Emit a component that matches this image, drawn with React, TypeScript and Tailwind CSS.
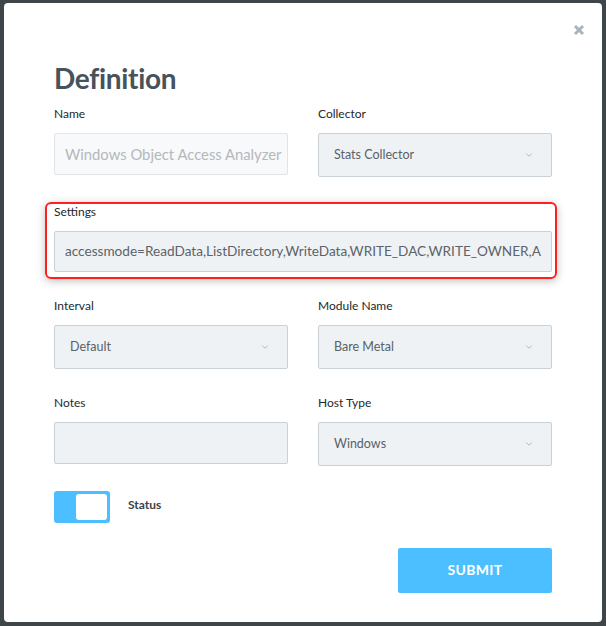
import { ChevronDown } from "lucide-react";

type SelectProps = {
  value: string;
};

function FakeSelect({ value }: SelectProps) {
  return (
    <div className="flex h-[44px] w-full items-center justify-between rounded-[2px] border border-[#c9d1d7] bg-[#eef2f5] pl-[15px] pr-[17px] text-[12.5px] text-[#5a6166]">
      <span>{value}</span>
      <ChevronDown className="h-[10px] w-[10px] text-[#8d979d]" strokeWidth={1.6} />
    </div>
  );
}

function Label({ children }: { children: string }) {
  return (
    <span className="block h-4 text-[12px] leading-4 text-[#23292c]">
      {children}
    </span>
  );
}

export default function App() {
  return (
    <div className="min-h-[626px] bg-[#3f4649] pl-[4px] pr-[4px] pt-[3px] pb-[4px] font-['Lato',sans-serif]">
      <div className="relative h-[619px] w-[598px] rounded-[4px] bg-white px-[50px]">
        <button
          type="button"
          aria-label="Close"
          className="absolute right-[17px] top-[21px] flex h-[12px] w-[12px] items-center justify-center"
        >
          <svg viewBox="0 0 12 12" className="h-[12px] w-[12px]">
            <path
              d="M2 2 L10 10 M10 2 L2 10"
              stroke="#a9b3ba"
              strokeWidth="3"
              strokeLinecap="butt"
            />
          </svg>
        </button>

        <h1 className="pt-[57px] text-[28px] font-bold leading-[36px] tracking-[-0.3px] text-[#48525a]">
          Definition
        </h1>

        <div className="mt-[10px] grid grid-cols-2 gap-x-[30px]">
          <div>
            <Label>Name</Label>
            <div className="mt-[11px] flex h-[42px] items-center overflow-hidden whitespace-nowrap rounded-[2px] border border-[#e1e5e9] bg-[#f8f9fb] pl-[10px] text-[14.8px] text-[#b3b8bc]">
              Windows Object Access Analyzer
            </div>
          </div>
          <div>
            <Label>Collector</Label>
            <div className="mt-[11px]">
              <FakeSelect value="Stats Collector" />
            </div>
          </div>
        </div>

        <div className="-ml-[9px] -mr-[5px] mt-[25px] rounded-[6px] border-2 border-[#ff1f1f] pb-[5px] pl-[7px] pr-[3px] shadow-[0_2px_8px_rgba(0,0,0,0.25)]">
          <Label>Settings</Label>
          <div className="mt-[11px] flex h-[41px] items-center overflow-hidden whitespace-nowrap rounded-[2px] border border-[#c9d1d7] bg-[#eef2f5] pl-[10px] text-[13.6px] text-[#5d6368]">
            accessmode=ReadData,ListDirectory,WriteData,WRITE_DAC,WRITE_OWNER,A
          </div>
        </div>

        <div className="mt-[19px] grid grid-cols-2 gap-x-[30px] gap-y-[26px]">
          <div>
            <Label>Interval</Label>
            <div className="mt-[11px]">
              <FakeSelect value="Default" />
            </div>
          </div>
          <div>
            <Label>Module Name</Label>
            <div className="mt-[11px]">
              <FakeSelect value="Bare Metal" />
            </div>
          </div>
          <div>
            <Label>Notes</Label>
            <div className="mt-[11px] h-[42px] rounded-[2px] border border-[#c9d1d7] bg-[#eef2f5]" />
          </div>
          <div>
            <Label>Host Type</Label>
            <div className="mt-[11px]">
              <FakeSelect value="Windows" />
            </div>
          </div>
        </div>

        <div className="mt-[25px] flex items-center gap-[18px]">
          <div className="flex h-[32px] w-[56px] items-center justify-end rounded-[3px] bg-[#4bbfff] pr-[3px]">
            <div className="h-[26px] w-[31px] rounded-[3px] bg-white" />
          </div>
          <span className="-mt-[4px] text-[12px] font-bold text-[#3a4347]">Status</span>
        </div>

        <div className="mt-[25px] flex justify-end">
          <button
            type="button"
            className="h-[45px] w-[154px] rounded-[2px] bg-[#4bbfff] pb-[2px] text-[14px] font-bold tracking-[0.3px] text-white"
          >
            SUBMIT
          </button>
        </div>
      </div>
    </div>
  );
}
